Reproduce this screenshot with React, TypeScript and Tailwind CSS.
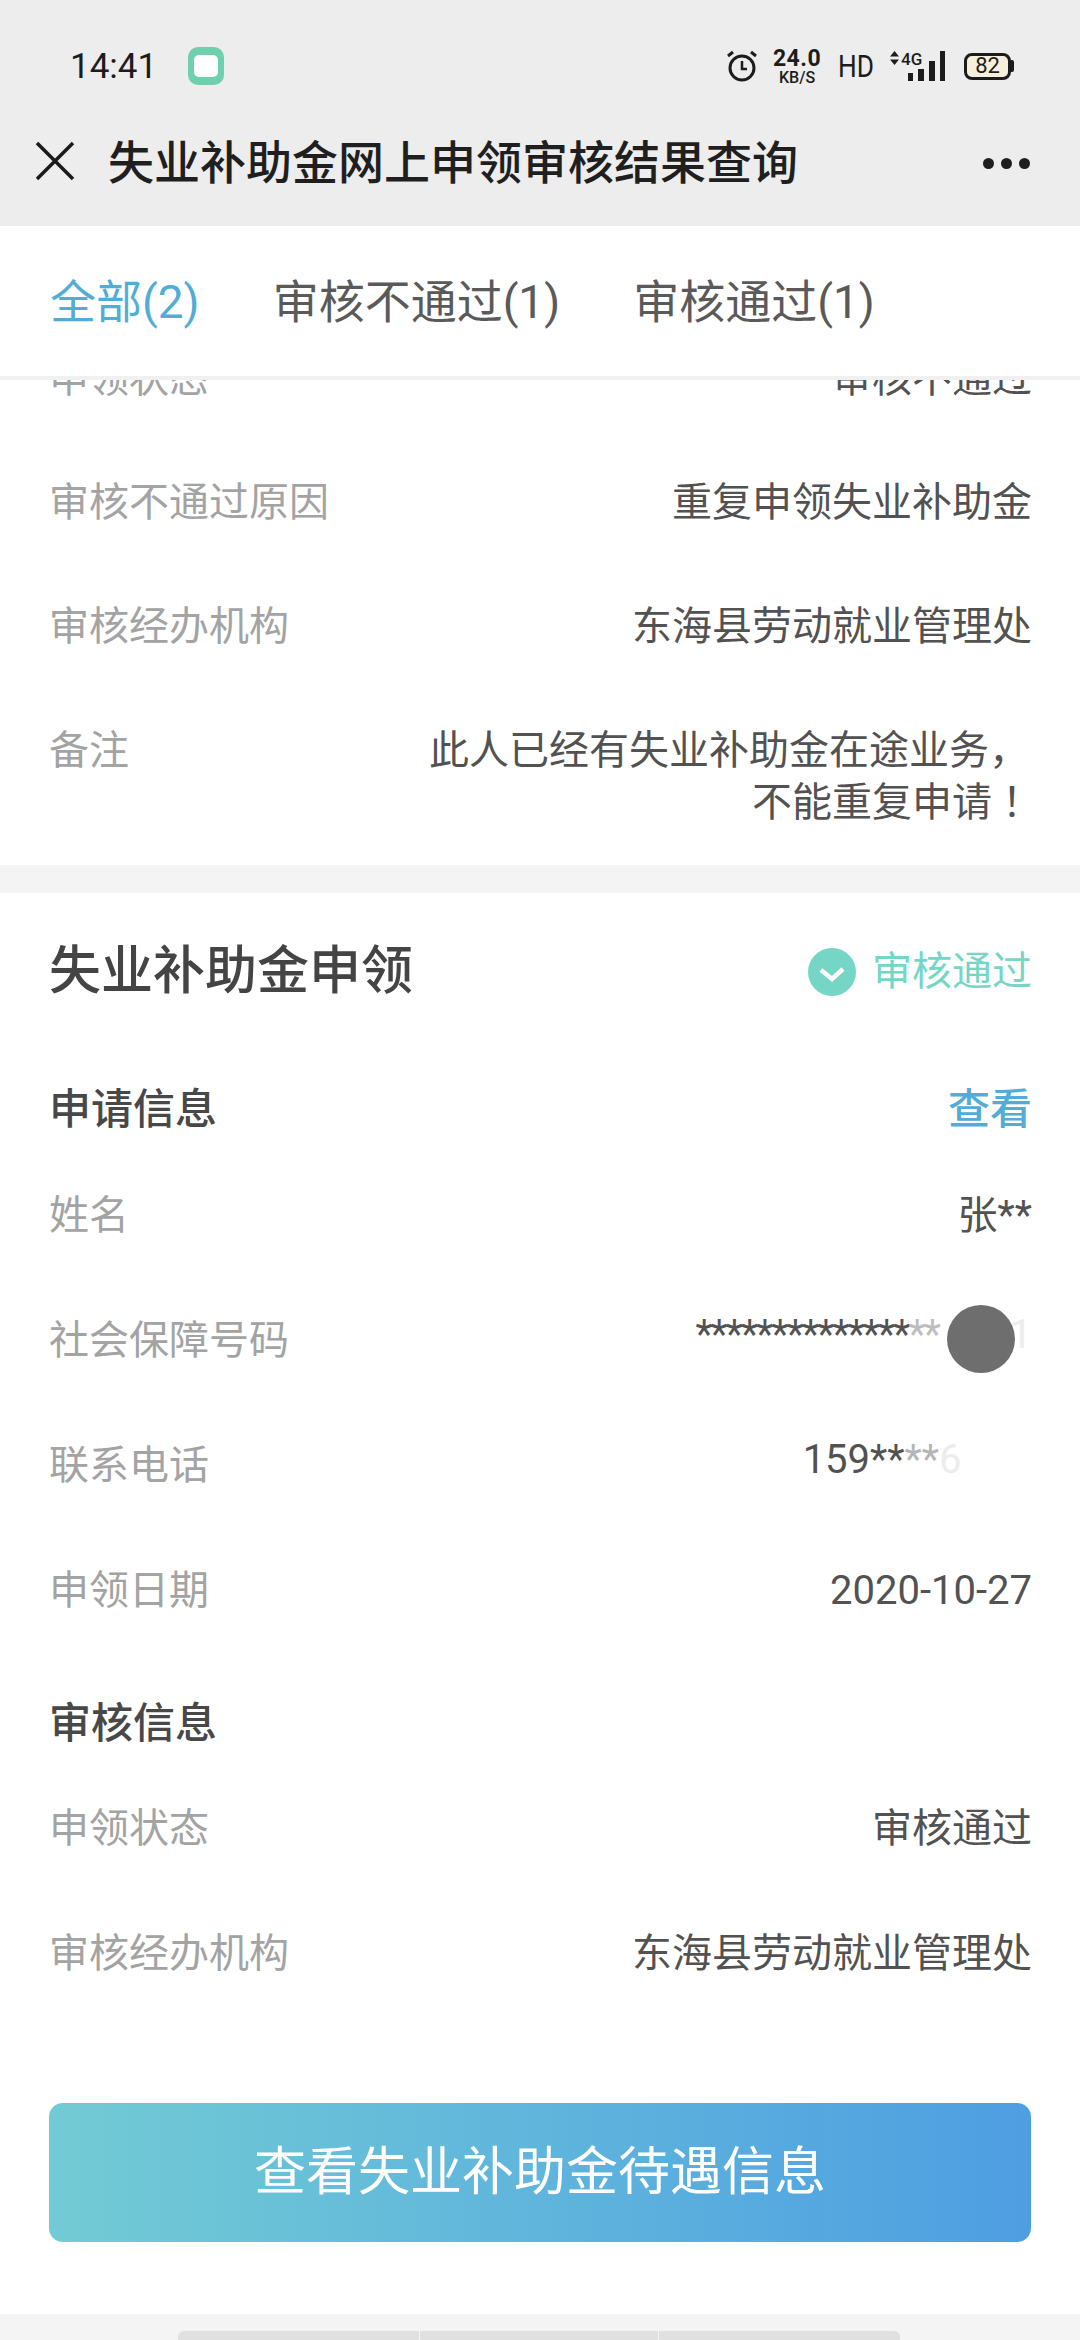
const font = 'font-["Roboto","Noto_Sans_CJK_SC",sans-serif]';

function Row({ label, children, className = '' }: { label: string; children: React.ReactNode; className?: string }) {
  return (
    <div className={`flex justify-between items-start pl-[49px] pr-[48px] text-[40px] leading-[52px] ${className}`}>
      <span className="text-[#a3a3a3] shrink-0">{label}</span>
      <div className="text-[#525252] text-right">{children}</div>
    </div>
  );
}

function StatusBar() {
  return (
    <div className="h-[100px] pl-[70px] pr-[66px] flex items-center pt-[32px] justify-between text-[#1c1c1c]">
      <div className="flex items-center gap-[31px]">
        <span className="text-[35px] leading-none">14:41</span>
        <div className="w-[36px] h-[38px] rounded-[10px] bg-[#6fd0ae] flex items-center justify-center">
          <div className="w-[24px] h-[22px] rounded-[5px] bg-white" />
        </div>
      </div>
      <div className="flex items-center">
        <svg width="32" height="32" viewBox="0 0 32 32" fill="none" stroke="#1c1c1c" strokeWidth="3" className="mr-[15px]">
          <circle cx="16" cy="18" r="12" />
          <path d="M16 11v8h5" strokeWidth="2.5" />
          <path d="M2 6l5-4M30 6l-5-4" />
        </svg>
        <div className="flex flex-col items-center w-[48px] mr-[17px]">
          <span className="text-[23px] leading-[22px] font-bold tracking-[0.5px]">24.0</span>
          <span className="text-[16px] leading-[15px] font-medium">KB/S</span>
        </div>
        <span className="text-[32px] leading-none w-[36px] mr-[14px] scale-x-[0.82] origin-left">HD</span>
        <div className="relative w-[57px] h-[30px] mr-[19px]">
          <svg width="9" height="14" viewBox="0 0 9 14" fill="#1c1c1c" className="absolute left-[2px] top-0">
            <path d="M4.5 0L9 5.5H0zM4.5 14L0 8.5h9z" />
          </svg>
          <span className="absolute left-[13px] top-0 text-[17px] leading-[16px] font-medium">4G</span>
          <div className="absolute inset-0 flex items-end justify-end gap-[5px]">
            <div className="w-[5px] h-[8px] bg-[#1c1c1c]" />
            <div className="w-[6px] h-[12px] bg-[#1c1c1c]" />
            <div className="w-[6px] h-[20px] bg-[#1c1c1c]" />
            <div className="w-[5px] h-[30px] bg-[#1c1c1c]" />
          </div>
        </div>
        <div className="flex items-center">
          <div className="w-[47px] h-[27px] rounded-[8px] border-[3px] border-[#1c1c1c] bg-[#f6efd9] flex items-center justify-center text-[22px] leading-none">
            82
          </div>
          <div className="w-[3px] h-[12px] bg-[#1c1c1c] rounded-r-[2px]" />
        </div>
      </div>
    </div>
  );
}

export default function App() {
  return (
    <div className={`relative w-[1080px] h-[2340px] overflow-hidden bg-white ${font}`}>
      {/* Top bar */}
      <div className="bg-[#ededed] h-[226px]">
        <StatusBar />
        <div className="flex items-center h-[126px] pl-[35px] pr-[50px]">
          <svg width="40" height="40" viewBox="0 0 40 40" stroke="#1a1a1a" strokeWidth="3.5" className="shrink-0 -mt-[4px]">
            <path d="M2 2l36 36M38 2L2 38" />
          </svg>
          <h1 className="ml-[33px] flex-1 text-[46px] leading-[60px] font-medium text-[#1f1f1f]">失业补助金网上申领审核结果查询</h1>
          <div className="flex gap-[7px]">
            <div className="w-[11px] h-[11px] rounded-full bg-[#1f1f1f]" />
            <div className="w-[11px] h-[11px] rounded-full bg-[#1f1f1f]" />
            <div className="w-[11px] h-[11px] rounded-full bg-[#1f1f1f]" />
          </div>
        </div>
      </div>

      {/* Tabs */}
      <div className="relative z-10 bg-white h-[154px] border-b-[4px] border-[#f0f0f0] flex items-center pl-[50px] gap-[73px] text-[46px] leading-[60px] text-[#5a5a5a] pt-[2px]">
        <span className="text-[#52add6]">全部(2)</span>
        <span>审核不通过(1)</span>
        <span>审核通过(1)</span>
      </div>

      {/* First record, scrolled under the tabs */}
      <div className="-mt-[27px] pb-[36px] flex flex-col">
        <Row label="申领状态">审核不通过</Row>
        <Row label="审核不通过原因" className="mt-[72px]">重复申领失业补助金</Row>
        <Row label="审核经办机构" className="mt-[72px]">东海县劳动就业管理处</Row>
        <Row label="备注" className="mt-[72px]">
          <div className="mr-[3px]">此人已经有失业补助金在途业务，</div>
          <div>
            不能重复申请<span className='leading-[0] font-["Noto_Sans_CJK_JP",sans-serif]'>！</span>
          </div>
        </Row>
      </div>
      <div className="h-[28px] bg-[#f4f4f4]" />

      {/* Second record */}
      <div className="pt-[45px]">
        <div className="flex justify-between items-center pl-[49px] pr-[48px] h-[68px]">
          <h2 className="text-[52px] leading-[68px] font-medium text-[#444444]">失业补助金申领</h2>
          <div className="flex items-center gap-[16px] text-[40px] text-[#75d6c5]">
            <svg width="48" height="48" viewBox="0 0 48 48">
              <circle cx="24" cy="24" r="24" fill="#75d6c5" />
              <path d="M13 22l11 9 11-10" fill="none" stroke="#fff" strokeWidth="4.5" />
            </svg>
            <span>审核通过</span>
          </div>
        </div>

        <div className="mt-[69px] flex justify-between items-center pl-[49px] pr-[48px] h-[68px]">
          <h3 className="text-[42px] font-medium text-[#484848]">申请信息</h3>
          <span className="text-[42px] text-[#52add6] font-medium">查看</span>
        </div>

        <Row label="姓名" className="mt-[47px] items-center">
          张**
        </Row>
        <Row label="社会保障号码" className="mt-[73px]">
          <span className="block leading-[40px] whitespace-nowrap">
            <span className="tracking-[-2px]">**************</span>
            <span className="text-[#bdbdbd] tracking-[-2px]">**</span>
            <span className="inline-block w-[93px] text-right text-[#ececec]">1</span>
          </span>
        </Row>
        <Row label="联系电话" className="mt-[73px]">
          <span className="block leading-[40px] whitespace-nowrap">
            159**<span className="text-[#b5b5b5]">**</span>
            <span className="inline-block w-[93px] text-left text-[#ececec]">6</span>
          </span>
        </Row>
        <Row label="申领日期" className="mt-[73px]">
          2020-10-27
        </Row>

        <div className="mt-[72px] pl-[49px] h-[68px] flex items-center">
          <h3 className="text-[42px] font-medium text-[#484848]">审核信息</h3>
        </div>
        <Row label="申领状态" className="mt-[46px]">审核通过</Row>
        <Row label="审核经办机构" className="mt-[73px]">东海县劳动就业管理处</Row>

        <div className="mt-[123px] ml-[49px] mr-[49px] h-[139px] rounded-[14px] bg-gradient-to-r from-[#72cbd4] to-[#4e9ee2] flex items-center justify-center text-[52px] leading-[64px] text-white">
          查看失业补助金待遇信息
        </div>
      </div>

      {/* Next record peeking in */}
      <div className="mt-[72px] h-[40px] bg-[#f4f4f4] pt-[17px] pl-[178px]">
        <div className="w-[722px] h-[20px] rounded-t-[6px] flex gap-[1px] bg-[#f4f4f4]">
          <div className="w-[241px] bg-[#e0e0e0] rounded-tl-[6px]" />
          <div className="w-[238px] bg-[#e0e0e0]" />
          <div className="flex-1 bg-[#e0e0e0] rounded-tr-[6px]" />
        </div>
      </div>

      {/* Floating button */}
      <div className="absolute left-[947px] top-[1305px] w-[68px] h-[68px] rounded-full bg-[#6e6e6e]" />
    </div>
  );
}
